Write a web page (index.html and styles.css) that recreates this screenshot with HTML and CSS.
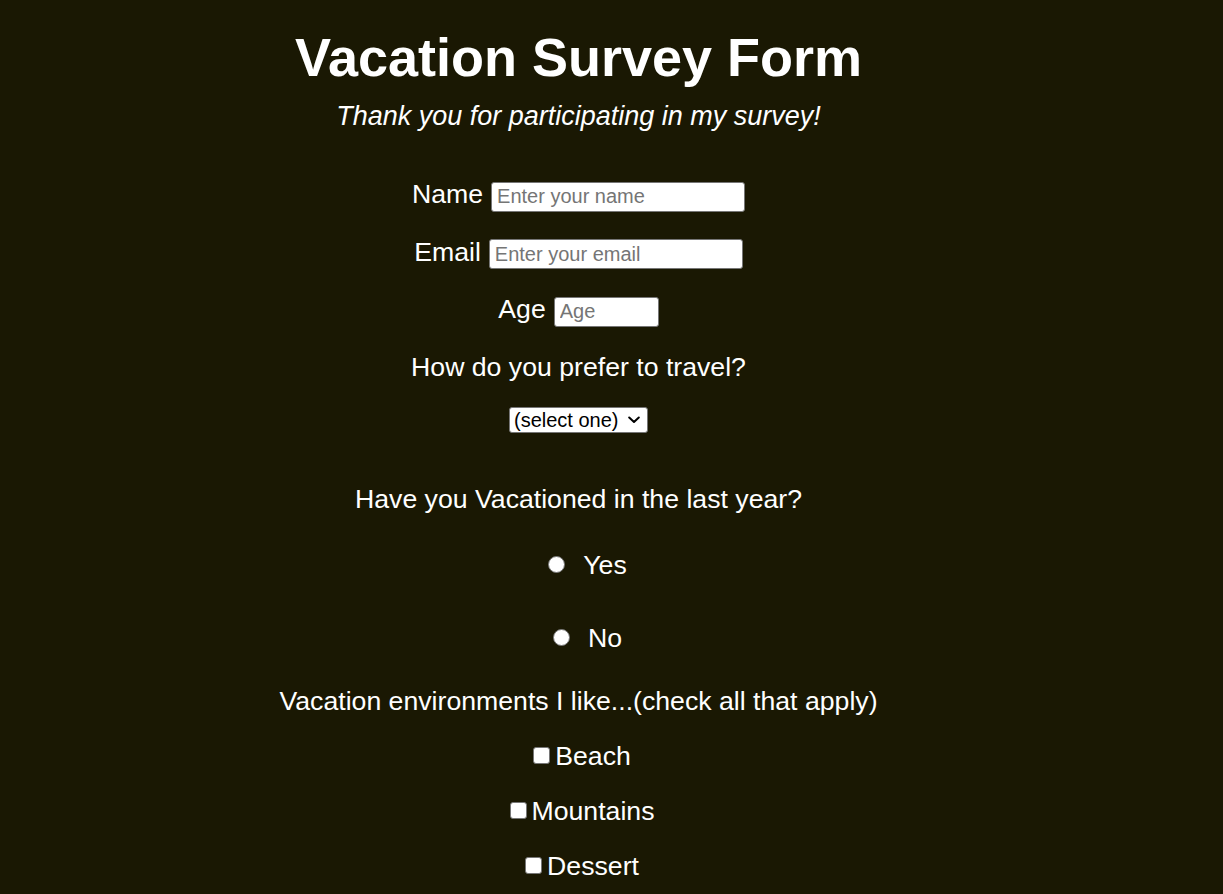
FILE: index.html
```html
<!DOCTYPE html>
<html lang="en">
<head>
<meta charset="utf-8">
<title>Vacation Survey Form</title>
<link rel="stylesheet" href="styles.css">
</head>
<body>
<main class="page">
  <h1 class="title">Vacation Survey Form</h1>
  <p class="subtitle">Thank you for participating in my survey!</p>
  <form class="survey">
    <div class="field field-first">
      <label class="field-label" for="name">Name</label>
      <input class="text-input" id="name" type="text" placeholder="Enter your name">
    </div>
    <div class="field">
      <label class="field-label" for="email">Email</label>
      <input class="text-input" id="email" type="email" placeholder="Enter your email">
    </div>
    <div class="field">
      <label class="field-label" for="age">Age</label>
      <input class="text-input age-input" id="age" type="number" placeholder="Age">
    </div>
    <p class="question">How do you prefer to travel?</p>
    <div class="select-row">
      <div class="select-wrap">
        <select class="select" id="travel">
          <option>(select one)</option>
          <option>Car</option>
          <option>Plane</option>
          <option>Train</option>
        </select>
        <svg class="select-chevron" width="12" height="8" viewBox="0 0 12 8" aria-hidden="true">
          <polyline points="1.2,1.5 6,6 10.8,1.5" fill="none" stroke="#000" stroke-width="2" stroke-linecap="round" stroke-linejoin="round"/>
        </svg>
      </div>
    </div>
    <p class="question question-vacation">Have you Vacationed in the last year?</p>
    <div class="radio-row radio-yes">
      <input class="radio" type="radio" id="yes" name="vacationed" value="yes">
      <label class="option-label" for="yes">Yes</label>
    </div>
    <div class="radio-row radio-no">
      <input class="radio" type="radio" id="no" name="vacationed" value="no">
      <label class="option-label" for="no">No</label>
    </div>
    <p class="question question-env">Vacation environments I like...(check all that apply)</p>
    <div class="check-row">
      <input class="checkbox" type="checkbox" id="beach">
      <label class="option-label" for="beach">Beach</label>
    </div>
    <div class="check-row">
      <input class="checkbox" type="checkbox" id="mountains">
      <label class="option-label" for="mountains">Mountains</label>
    </div>
    <div class="check-row">
      <input class="checkbox" type="checkbox" id="dessert">
      <label class="option-label" for="dessert">Dessert</label>
    </div>
  </form>
</main>
</body>
</html>
```
FILE: styles.css
```css
html, body {
  margin: 0;
  padding: 0;
  background: #1a1803;
}

body {
  font-family: "Liberation Sans", Arial, sans-serif;
  color: #ffffff;
  height: 894px;
  overflow: hidden;
}

.page {
  width: 1157px;
  text-align: center;
}

.title {
  font-size: 54px;
  font-weight: bold;
  line-height: normal;
  margin: 26px 0 0;
}

.subtitle {
  font-size: 27px;
  font-style: italic;
  line-height: normal;
  margin: 13px 0 0;
}

.survey {
  display: flex;
  flex-direction: column;
  align-items: center;
}

.field {
  display: flex;
  justify-content: center;
  align-items: baseline;
  gap: 8px;
  margin-top: 25px;
}

.field-first {
  margin-top: 47px;
}

.field-label {
  font-size: 26.67px;
  line-height: normal;
}

.text-input {
  box-sizing: border-box;
  width: 254px;
  height: 30px;
  padding: 1px 5px;
  font-family: "Liberation Sans", Arial, sans-serif;
  font-size: 20px;
  color: #000;
  background: #fff;
  border: 1px solid #767676;
  border-radius: 3px;
}

.text-input::placeholder {
  color: #757575;
}

.age-input {
  width: 105px;
  -moz-appearance: textfield;
}

.age-input::-webkit-outer-spin-button,
.age-input::-webkit-inner-spin-button {
  -webkit-appearance: none;
  margin: 0;
}

.question {
  font-size: 26.67px;
  line-height: normal;
  margin: 25px 0 0;
}

.select-row {
  margin-top: 24px;
}

.select-wrap {
  position: relative;
  display: inline-block;
}

.select {
  -webkit-appearance: none;
  appearance: none;
  box-sizing: border-box;
  display: block;
  width: 139px;
  height: 26px;
  padding: 0 0 0 4px;
  font-family: "Liberation Sans", Arial, sans-serif;
  font-size: 20px;
  color: #000;
  background: #fff;
  border: 1px solid #767676;
  border-radius: 3px;
}

.select-chevron {
  position: absolute;
  right: 8px;
  top: 9px;
  pointer-events: none;
}

.question-vacation {
  margin-top: 51px;
}

.radio-row {
  display: flex;
  justify-content: center;
  align-items: center;
  gap: 18px;
  padding-left: 18px;
}

.radio-yes {
  margin-top: 35px;
}

.radio-no {
  margin-top: 42px;
}

.radio {
  -webkit-appearance: none;
  appearance: none;
  box-sizing: border-box;
  width: 17px;
  height: 17px;
  margin: 0 0 2px;
  background: #fff;
  border: 1px solid #767676;
  border-radius: 50%;
}

.option-label {
  font-size: 26.67px;
  line-height: normal;
}

.question-env {
  margin-top: 32px;
}

.check-row {
  display: flex;
  justify-content: center;
  align-items: center;
  gap: 5px;
  padding-left: 7px;
  margin-top: 24px;
}

.checkbox {
  -webkit-appearance: none;
  appearance: none;
  box-sizing: border-box;
  width: 17px;
  height: 17px;
  margin: 0 0 2px;
  background: #fff;
  border: 1px solid #767676;
  border-radius: 3px;
}
```
